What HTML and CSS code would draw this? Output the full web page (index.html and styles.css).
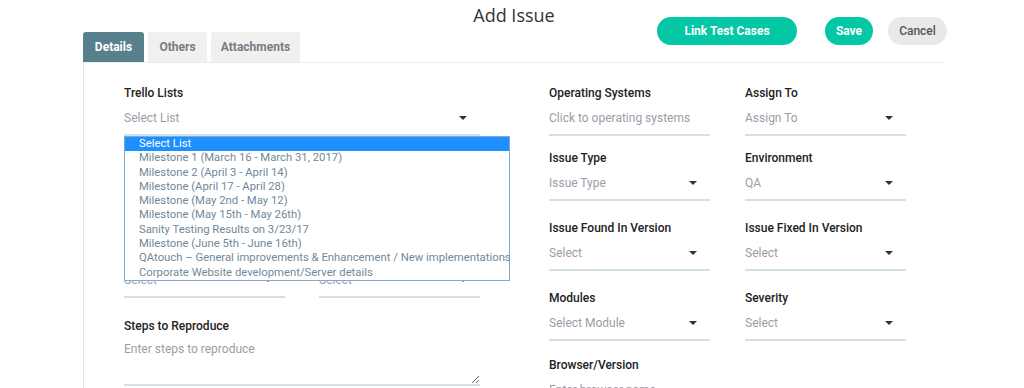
FILE: index.html
```html
<!DOCTYPE html>
<html>
<head>
<meta charset="utf-8">
<link rel="stylesheet" href="styles.css">
</head>
<body>
<div class="page">
  <header class="top">
    <h1 class="title">Add Issue</h1>
    <div class="actions">
      <button class="btn btn-green btn-link">Link Test Cases</button>
      <button class="btn btn-green btn-save">Save</button>
      <button class="btn btn-grey">Cancel</button>
    </div>
    <nav class="tabs">
      <span class="tab active">Details</span>
      <span class="tab">Others</span>
      <span class="tab">Attachments</span>
    </nav>
  </header>

  <main class="form">
    <section class="left">
      <div class="field">
        <div class="label">Trello Lists</div>
        <div class="control"><span>Select List</span><i class="caret"></i></div>
      </div>
      <div class="field covered">
        <div class="label">Issue Title</div>
        <div class="control"><span>Enter issue title</span></div>
      </div>
      <div class="pair">
        <div class="field">
          <div class="label covered">Priority</div>
          <div class="control"><span>Select</span><i class="caret"></i></div>
        </div>
        <div class="field">
          <div class="label covered">Status</div>
          <div class="control"><span>Select</span><i class="caret"></i></div>
        </div>
      </div>
      <div class="field">
        <div class="label">Steps to Reproduce</div>
        <textarea class="area" placeholder="Enter steps to reproduce"></textarea>
      </div>

      <ul class="listbox">
        <li class="selected">Select List</li>
        <li>Milestone 1 (March 16 - March 31, 2017)</li>
        <li>Milestone 2 (April 3 - April 14)</li>
        <li>Milestone (April 17 - April 28)</li>
        <li>Milestone (May 2nd - May 12)</li>
        <li>Milestone (May 15th - May 26th)</li>
        <li>Sanity Testing Results on 3/23/17</li>
        <li>Milestone (June 5th - June 16th)</li>
        <li>QAtouch – General improvements &amp; Enhancement / New implementations</li>
        <li>Corporate Website development/Server details</li>
      </ul>
    </section>

    <section class="right">
      <div class="field">
        <div class="label">Operating Systems</div>
        <div class="control"><span>Click to operating systems</span></div>
      </div>
      <div class="field">
        <div class="label">Assign To</div>
        <div class="control"><span>Assign To</span><i class="caret"></i></div>
      </div>
      <div class="field">
        <div class="label">Issue Type</div>
        <div class="control"><span>Issue Type</span><i class="caret"></i></div>
      </div>
      <div class="field">
        <div class="label">Environment</div>
        <div class="control"><span>QA</span><i class="caret"></i></div>
      </div>
      <div class="field">
        <div class="label">Issue Found In Version</div>
        <div class="control"><span>Select</span><i class="caret"></i></div>
      </div>
      <div class="field">
        <div class="label">Issue Fixed In Version</div>
        <div class="control"><span>Select</span><i class="caret"></i></div>
      </div>
      <div class="field">
        <div class="label">Modules</div>
        <div class="control"><span>Select Module</span><i class="caret"></i></div>
      </div>
      <div class="field">
        <div class="label">Severity</div>
        <div class="control"><span>Select</span><i class="caret"></i></div>
      </div>
      <div class="field">
        <div class="label">Browser/Version</div>
        <div class="control"><span>Enter browser name</span></div>
      </div>
    </section>
  </main>
</div>
</body>
</html>
```

FILE: styles.css
```css
html, body {
  margin: 0;
  padding: 0;
  height: 388px;
  overflow: hidden;
  background: #fff;
}
body {
  font-family: Roboto, "Liberation Sans", Arial, sans-serif;
  color: #222;
}
.page {
  margin: 0 79px 0 83px;
}
.top {
  display: grid;
  grid-template-columns: 1fr auto;
  grid-template-rows: 32px 30px;
  border-bottom: 1px solid #ececec;
}
.title {
  grid-column: 1 / -1;
  grid-row: 1;
  margin: 0;
  padding-top: 3px;
  text-align: center;
  font-family: "Open Sans", "Liberation Sans", sans-serif;
  font-weight: 400;
  font-size: 18px;
  line-height: 24px;
  color: #333;
}
.actions {
  grid-column: 2;
  grid-row: 1 / 3;
  margin-top: 17px;
  margin-right: -2px;
  display: flex;
  align-items: flex-start;
}
.btn {
  height: 28px;
  border: none;
  border-radius: 14px;
  font-family: Roboto, "Liberation Sans", sans-serif;
  font-size: 12px;
  font-weight: 700;
  padding: 0;
  cursor: pointer;
}
.btn-green {
  background: #04c8a5;
  color: #fff;
}
.btn-link { width: 140px; margin-right: 28px; }
.btn-save { width: 48px; margin-right: 15px; }
.btn-grey {
  width: 59px;
  background: #e9e9e9;
  color: #555;
  font-weight: 500;
}
.tabs {
  grid-column: 1;
  grid-row: 2;
  display: flex;
  gap: 4px;
  align-items: stretch;
}
.tab {
  display: flex;
  align-items: center;
  justify-content: center;
  height: 30px;
  border-radius: 3px 3px 0 0;
  background: #f0f0f0;
  color: #7a7a85;
  font-size: 12px;
  font-weight: 700;
}
.tab:nth-child(1) { width: 61px; }
.tab:nth-child(2) { width: 59px; }
.tab:nth-child(3) { width: 89px; }
.tab.active {
  background: #587f8c;
  color: #fff;
}

.form {
  border-left: 1px solid #dbe8f3;
  padding: 22px 0 0 40px;
  display: grid;
  grid-template-columns: 356px 357px;
  column-gap: 69px;
  align-items: start;
}
.left {
  position: relative;
  display: grid;
  grid-template-rows: 65px 97px 71px auto;
}
.covered {
  visibility: hidden;
}
.pair {
  display: grid;
  grid-template-columns: 161px 161px;
  column-gap: 34px;
}
.right {
  display: grid;
  grid-template-columns: 161px 161px;
  column-gap: 35px;
  grid-template-rows: 65px 70px 70px 67px auto;
}
.label {
  font-size: 12px;
  font-weight: 500;
  line-height: 16px;
  color: #222;
}
.control {
  display: flex;
  align-items: center;
  justify-content: space-between;
  height: 33px;
  border-bottom: 2px solid #d2e0ea;
  padding-right: 13px;
  font-size: 12px;
  color: #9c9ca8;
}
.caret {
  width: 0;
  height: 0;
  border-left: 4px solid transparent;
  border-right: 4px solid transparent;
  border-top: 4px solid #333;
}
.area {
  display: block;
  width: 356px;
  height: 46px;
  box-sizing: border-box;
  margin-top: 6px;
  padding: 2px 0 0;
  border: none;
  border-bottom: 2px solid #d2e0ea;
  resize: vertical;
  font-family: Roboto, "Liberation Sans", sans-serif;
  font-size: 12px;
  color: #333;
  outline: none;
}
.area::placeholder { color: #9c9ca8; }

.listbox {
  position: absolute;
  top: 51px;
  left: 0;
  width: 386px;
  box-sizing: border-box;
  margin: 0;
  padding: 0;
  list-style: none;
  background: #fff;
  border: 1px solid #7fa9da;
}
.listbox li {
  height: 14.3px;
  line-height: 14.3px;
  padding-left: 14px;
  font-size: 11.3px;
  color: #71889b;
  white-space: nowrap;
}
.listbox li.selected {
  background: #1e8fff;
  color: #fff;
}
```
